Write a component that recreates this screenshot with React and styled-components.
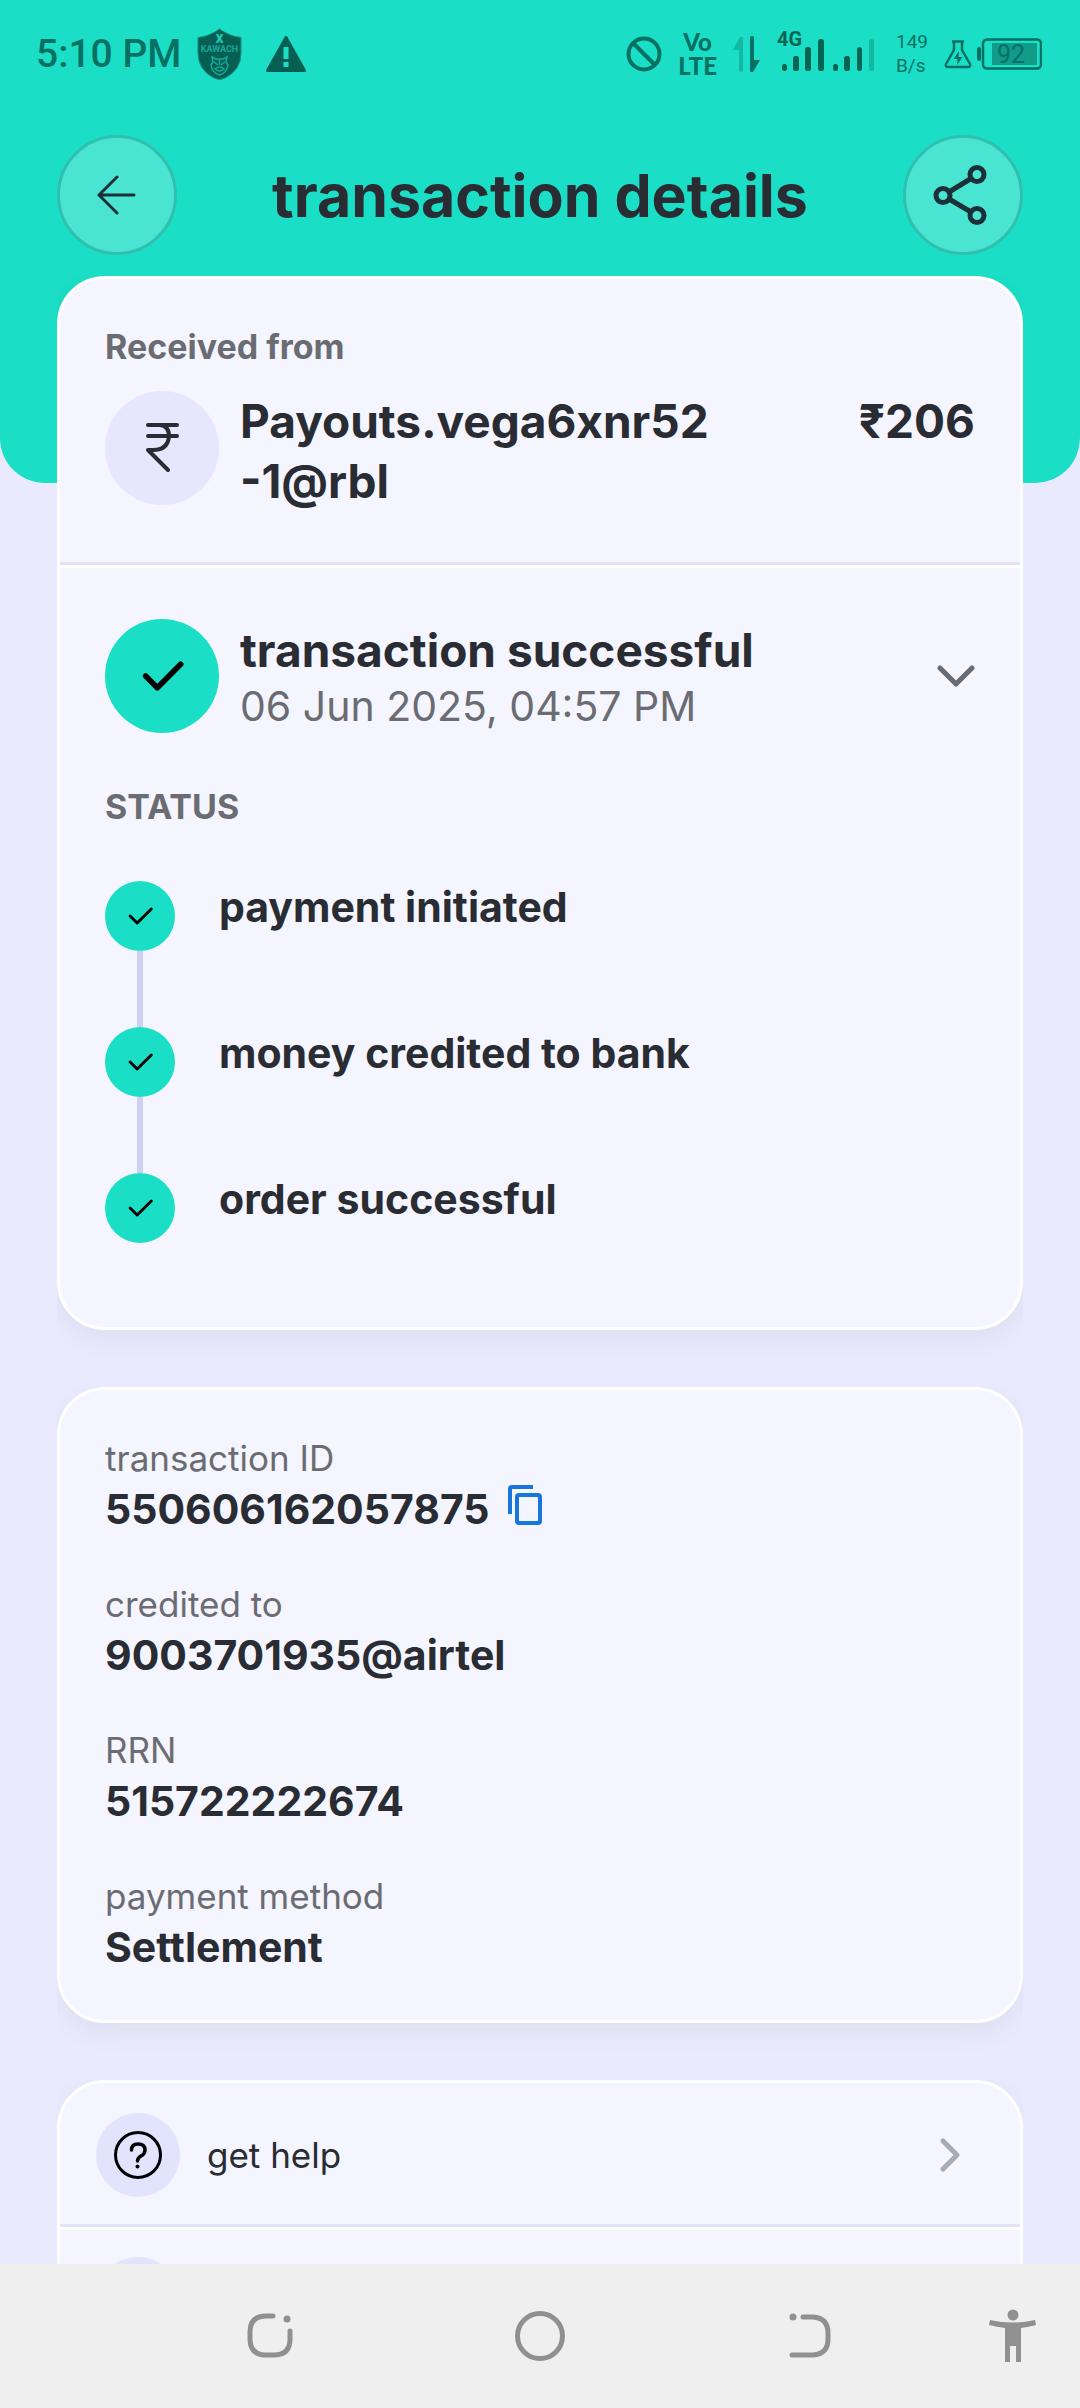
import styled, { createGlobalStyle } from "styled-components";

const steps = ["payment initiated", "money credited to bank", "order successful"];

const details = [
  { label: "transaction ID", value: "550606162057875", copy: true },
  { label: "credited to", value: "9003701935@airtel" },
  { label: "RRN", value: "515722222674" },
  { label: "payment method", value: "Settlement" },
];

const Check = ({ size, stroke }) => (
  <svg width={size} height={size} viewBox="0 0 24 24" fill="none" stroke="#000" strokeWidth={stroke} strokeLinecap="round" strokeLinejoin="round" aria-hidden="true">
    <path d="M5 12L10 17L20 7" />
  </svg>
);

const StatusIcons = () => (
  <StatusRight>
    <svg width="36" height="36" viewBox="0 0 36 36" fill="none" stroke="#067062" strokeWidth="4">
      <circle cx="18" cy="18" r="15.500" />
      <path d="M7 7l22 22" />
    </svg>
    <Volte>
      Vo
      <br />
      LTE
    </Volte>
    <svg width="27" height="36" viewBox="0 0 27 36">
      <path d="M0 14L6.500 1.500Q10 0 10 2V34Q10 36 8 36Q6 36 6 34V14Z" fill="#13b8a2" />
      <path d="M17 2Q17 0 19 0Q21 0 21 2V24H27L20 36Q17 37 17 34Z" fill="#067062" />
    </svg>
    <svg width="104" height="60" viewBox="-1 -5 104 60" fill="#056555">
      <text x="0" y="17" fontSize="20" fontWeight="700" fontFamily="Roboto, sans-serif">4G</text>
      <rect x="5" y="35" width="5" height="7" rx="2.500" />
      <rect x="16" y="27" width="6" height="15" rx="2.500" />
      <rect x="28" y="18" width="6" height="24" rx="2.500" />
      <rect x="41" y="10" width="6" height="32" rx="2.500" />
      <rect x="56" y="35" width="5" height="7" rx="2.500" />
      <rect x="67" y="27" width="6" height="15" rx="2.500" />
      <rect x="80" y="18" width="5" height="24" rx="2.500" />
      <rect x="92" y="10" width="5" height="32" rx="2.500" fill="#13b8a2" />
    </svg>
    <NetSpeed>
      <span>149</span>
      <span>B/s</span>
    </NetSpeed>
    <Power>
      <svg width="28" height="30" viewBox="0 0 28 30" fill="none" stroke="#067062" strokeWidth="2.500" strokeLinejoin="round">
        <path d="M8 2.500H20M10 3V11L2 25Q1 28 4 28H24Q27 28 26 25L18 11V3" />
        <path d="M15 12L9.500 20H13.500L13 26L18.500 18H14.500Z" fill="#067062" stroke="none" />
      </svg>
      <svg width="65" height="32" viewBox="0 0 65 32">
        <rect x="0" y="9" width="4" height="14" rx="2" fill="#067062" />
        <rect x="6" y="1.500" width="58" height="29" rx="4" fill="none" stroke="#067062" strokeWidth="2.500" />
        <rect x="15" y="5" width="45" height="22" fill="#109c89" />
        <text x="20" y="25" fontSize="25" fill="#067062" fontFamily="Roboto, sans-serif">92</text>
      </svg>
    </Power>
  </StatusRight>
);

const App = () => {
  return (
    <Screen>
      <Global />
      <Scroller>
        <Hero>
          <StatusBar>
            <Clock>5:10 PM</Clock>
            <Shield width="45" height="52" viewBox="0 0 45 52">
              <path d="M22.500 1Q32 8 44 9.500V25Q44 42 28 50Q22.500 53 17 50Q1 42 1 25V9.500Q13 8 22.500 1Z" fill="#075f54" stroke="#0b9485" />
              <text x="22.500" y="15" fontSize="12" fontWeight="900" textAnchor="middle" fill="#1bcdb7">X</text>
              <text x="22.500" y="24" fontSize="9" fontWeight="700" textAnchor="middle" fill="#14a896">KAWACH</text>
              <path d="M15 29L19 31H26L30 29L29 34L31 37Q30 45 22.500 47Q15 45 14 37L16 34ZM17 34L21 37M28 34L24 37M18 41Q22.500 37 27 41Q22.500 45 18 41ZM22.500 31V37" fill="none" stroke="#14a896" strokeWidth="1.500" />
            </Shield>
            <svg width="40" height="36" viewBox="0 0 40 36">
              <path d="M20 1.500L38.500 34.500H1.500Z" fill="#075f54" stroke="#075f54" strokeWidth="3" strokeLinejoin="round" />
              <path d="M17.500 11H22.500V23H17.500ZM17.500 26H22.500V31H17.500Z" fill="#1bdec6" />
            </svg>
            <StatusIcons />
          </StatusBar>
          <TitleBar>
            <RoundButton aria-label="back">
              <svg width="40" height="40" viewBox="0 0 40 40" fill="none" stroke="#1c3039" strokeWidth="3" strokeLinecap="round" strokeLinejoin="round">
                <path d="M20 2L2 20L20 38M2 20H37" />
              </svg>
            </RoundButton>
            <h1>transaction details</h1>
            <RoundButton aria-label="share">
              <svg width="62" height="62" viewBox="0 0 62 62" fill="none" stroke="#1c3039" strokeWidth="5">
                <circle cx="45" cy="10.500" r="7" />
                <circle cx="11" cy="31.500" r="7" />
                <circle cx="45" cy="51.500" r="7" />
                <path d="M17 28L39 14.500M17 35L39 48" />
              </svg>
            </RoundButton>
          </TitleBar>
        </Hero>

        <Cards>
          <Card>
            <PayerSection>
              <SmallLabel>Received from</SmallLabel>
              <PayerRow>
                <Avatar color="#e6e7fe">
                  <svg width="34" height="52" viewBox="0 0 34 52" fill="none" stroke="#2a2c33" strokeWidth="4" strokeLinecap="round" strokeLinejoin="round">
                    <path d="M3 3H32M3 14H32M15 3Q24 4 24 14Q23 28 8 28H3L23 48" />
                  </svg>
                </Avatar>
                <Strong>
                  Payouts.vega6xnr52
                  <br />
                  -1@rbl
                </Strong>
                <Amount>₹206</Amount>
              </PayerRow>
            </PayerSection>
            <Divider />
            <StatusSection>
              <StatusHead>
                <Avatar color="#1bdec6">
                  <Check size={56} stroke={2.4} />
                </Avatar>
                <div>
                  <Strong>transaction successful</Strong>
                  <When>06 Jun 2025, 04:57 PM</When>
                </div>
                <Toggle aria-label="hide status">
                  <svg width="38" height="24" viewBox="0 0 38 24" fill="none" stroke="#6b6c72" strokeWidth="5" strokeLinecap="round" strokeLinejoin="round">
                    <path d="M3 4L19 20L35 4" />
                  </svg>
                </Toggle>
              </StatusHead>
              <SmallLabel>STATUS</SmallLabel>
              <Steps>
                {steps.map((step) => (
                  <Step key={step}>
                    <Rail>
                      <Dot>
                        <Check size={34} stroke={2} />
                      </Dot>
                    </Rail>
                    <span>{step}</span>
                  </Step>
                ))}
              </Steps>
            </StatusSection>
          </Card>

          <Card>
            <Details>
              {details.map((item) => (
                <div key={item.label}>
                  <dt>{item.label}</dt>
                  <dd>
                    {item.value}
                    {item.copy && (
                      <CopyButton aria-label="copy transaction ID">
                        <svg width="34" height="40" viewBox="0 0 34 40" fill="none" stroke="#1776dc" strokeWidth="4">
                          <path d="M2 29V4Q2 2 4 2H25" />
                          <rect x="9" y="10" width="23" height="28" rx="2" />
                        </svg>
                      </CopyButton>
                    )}
                  </dd>
                </div>
              ))}
            </Details>
          </Card>

          <Card>
            <MenuRow>
              <MenuIcon>
                <svg width="50" height="50" viewBox="0 0 50 50" fill="none" stroke="#000" strokeWidth="3" strokeLinecap="round">
                  <circle cx="25" cy="25" r="22.500" />
                  <path d="M18.500 20Q18.500 14 25 14Q32 14 32 20Q32 24 28 26Q24.500 28 24.500 31" strokeWidth="3.500" />
                  <circle cx="24.500" cy="36.500" r="2" fill="#000" stroke="none" />
                </svg>
              </MenuIcon>
              get help
              <svg width="24" height="36" viewBox="0 0 24 36" fill="none" stroke="#a9aab2" strokeWidth="5" strokeLinecap="round" strokeLinejoin="round">
                <path d="M4 4L18 18L4 32" />
              </svg>
            </MenuRow>
            <Divider />
            <MenuRow aria-label="more">
              <MenuIcon />
            </MenuRow>
          </Card>
        </Cards>
      </Scroller>

      <NavBar>
        <button aria-label="recent apps">
          <svg width="48" height="48" viewBox="0 0 48 48" fill="none" stroke="#909090" strokeWidth="5" strokeLinecap="round">
            <path d="M27 4H20Q4 4 4 20V27Q4 43 20 43H28Q44 43 44 27V19" />
            <circle cx="41" cy="7" r="3.500" fill="#909090" stroke="none" />
          </svg>
        </button>
        <button aria-label="home">
          <svg width="52" height="52" viewBox="0 0 52 52" fill="none" stroke="#909090" strokeWidth="5">
            <circle cx="26" cy="26" r="22.500" />
          </svg>
        </button>
        <button aria-label="go back">
          <svg width="44" height="48" viewBox="0 0 44 48" fill="none" stroke="#909090" strokeWidth="5" strokeLinecap="round">
            <path d="M15 5H25Q40 6 40 21V27Q40 42 25 43H4" />
            <circle cx="5" cy="5" r="3.500" fill="#909090" stroke="none" />
          </svg>
        </button>
        <button aria-label="accessibility">
          <svg width="48" height="54" viewBox="0 0 48 54" fill="#909090">
            <circle cx="24" cy="6" r="5.500" />
            <path d="M1 11Q24 16 46 11L47 16Q40 18 32 19V53H27V37H21V53H16V19Q8 18 0 16Z" />
          </svg>
        </button>
      </NavBar>
    </Screen>
  );
};

const Global = createGlobalStyle`
  *{
    box-sizing:border-box;
  }
  body{
    margin:0;
    font-family:Inter, "Noto Sans", sans-serif;
    color:#2a2c33;
    background:#e9eafe;
  }
  h1, h2, p, dl, dd, ol{
    margin:0;
    padding:0;
  }
  button{
    border:0;
    padding:0;
    background:none;
    font:inherit;
    color:inherit;
  }
  svg{
    display:block;
    flex-shrink:0;
  }
`;

const Screen = styled.div`
  display:flex;
  flex-direction:column;
  height:100vh;
`;

const Scroller = styled.main`
  flex:1;
  min-height:0;
  overflow-y:auto;
  scrollbar-width:none;
`;

const Hero = styled.header`
  padding-bottom:228px;
  background:#1bdec6;
  border-radius:0 0 45px 45px;
`;

const StatusBar = styled.div`
  display:flex;
  align-items:center;
  height:108px;
  padding:0 38px 0 36px;
  font-family:Roboto, sans-serif;
  color:#067062;
`;

const Clock = styled.span`
  font-size:39px;
  font-weight:500;
`;

const Shield = styled.svg`
  margin:0 24px 0 16px;
  font-family:Roboto, sans-serif;
`;

const StatusRight = styled.div`
  display:flex;
  align-items:center;
  gap:16px;
  margin-left:auto;
`;

const Volte = styled.span`
  font-family:Lato, sans-serif;
  font-size:24px;
  line-height:24px;
  font-weight:900;
  text-align:center;
`;

const NetSpeed = styled.span`
  display:flex;
  flex-direction:column;
  font-size:19px;
  line-height:24px;
`;

const Power = styled.span`
  display:flex;
  align-items:center;
  gap:5px;
`;

const TitleBar = styled.div`
  display:flex;
  align-items:center;
  justify-content:space-between;
  padding:27px 57px 0;
  h1{
    font-size:59px;
    font-weight:700;
  }
`;

const RoundButton = styled.button`
  display:flex;
  align-items:center;
  justify-content:center;
  width:120px;
  height:120px;
  && {
    border:3px solid #2fc0ae;
    background:#49e5d2;
  }
  border-radius:50%;
`;

const Cards = styled.div`
  display:flex;
  flex-direction:column;
  gap:57px;
  margin-top:-207px;
  padding:0 57px 57px;
`;

const Card = styled.section`
  background:#f4f5ff;
  border:3px solid white;
  border-radius:48px;
  box-shadow:0 10px 24px rgba(90, 80, 60, 0.07);
  clip-path:inset(0 0 -48px 0);
`;

const Divider = styled.div`
  height:6px;
  background:white;
  border-top:3px solid #e2e3f6;
`;

const PayerSection = styled.div`
  padding:48px 45px 51px;
`;

const StatusSection = styled.div`
  padding:51px 45px 84px;
`;

const SmallLabel = styled.h2`
  font-size:34px;
  line-height:40px;
  font-weight:700;
  color:#6b6c72;
`;

const PayerRow = styled.div`
  display:flex;
  align-items:flex-start;
  gap:21px;
  margin-top:24px;
`;

const Avatar = styled.span`
  display:flex;
  align-items:center;
  justify-content:center;
  flex-shrink:0;
  width:114px;
  height:114px;
  border-radius:50%;
  background:${(props) => props.color};
`;

const Strong = styled.p`
  font-size:46px;
  line-height:60px;
  font-weight:700;
`;

const Amount = styled(Strong)`
  margin-left:auto;
`;

const StatusHead = styled.div`
  display:flex;
  align-items:center;
  gap:21px;
  margin-bottom:54px;
`;

const When = styled.p`
  font-size:41px;
  line-height:52px;
  color:#6b6c72;
`;

const Toggle = styled.button`
  margin-left:auto;
`;

const Steps = styled.ol`
  margin-top:54px;
  list-style:none;
`;

const Rail = styled.div`
  display:flex;
  flex-direction:column;
  align-items:center;
  width:70px;
`;

const Dot = styled.span`
  display:flex;
  align-items:center;
  justify-content:center;
  width:70px;
  height:70px;
  border-radius:50%;
  background:#1bdec6;
`;

const Step = styled.li`
  display:flex;
  gap:44px;
  font-size:41px;
  line-height:52px;
  font-weight:700;
  &:not(:last-child){
    min-height:146px;
    ${Rail}::after{
      content:"";
      flex:1;
      width:6px;
      background:#cdd0f2;
    }
  }
`;

const Details = styled.dl`
  display:flex;
  flex-direction:column;
  gap:48px;
  padding:47px 45px;
  dt{
    margin-bottom:4px;
    font-size:35px;
    line-height:42px;
    color:#6b6c72;
  }
  dd{
    display:flex;
    align-items:center;
    gap:18px;
    font-size:41px;
    line-height:52px;
    font-weight:700;
  }
`;

const CopyButton = styled.button`
  margin-bottom:8px;
`;

const MenuRow = styled.button`
  display:flex;
  align-items:center;
  gap:27px;
  width:100%;
  && {
    padding:27px 57px 27px 36px;
    font-size:35px;
    line-height:42px;
  }
  text-align:left;
  > svg{
    margin-left:auto;
  }
  &&:first-child{
    padding-top:30px;
  }
`;

const MenuIcon = styled.span`
  display:flex;
  align-items:center;
  justify-content:center;
  width:84px;
  height:84px;
  border-radius:50%;
  background:#e2e4fd;
`;

const NavBar = styled.nav`
  display:grid;
  grid-template-columns:2fr 2fr 2fr 1fr;
  flex-shrink:0;
  height:144px;
  padding-left:12.5%;
  background:#efefef;
  button{
    display:flex;
    align-items:center;
    justify-content:center;
  }
`;

export default App;
